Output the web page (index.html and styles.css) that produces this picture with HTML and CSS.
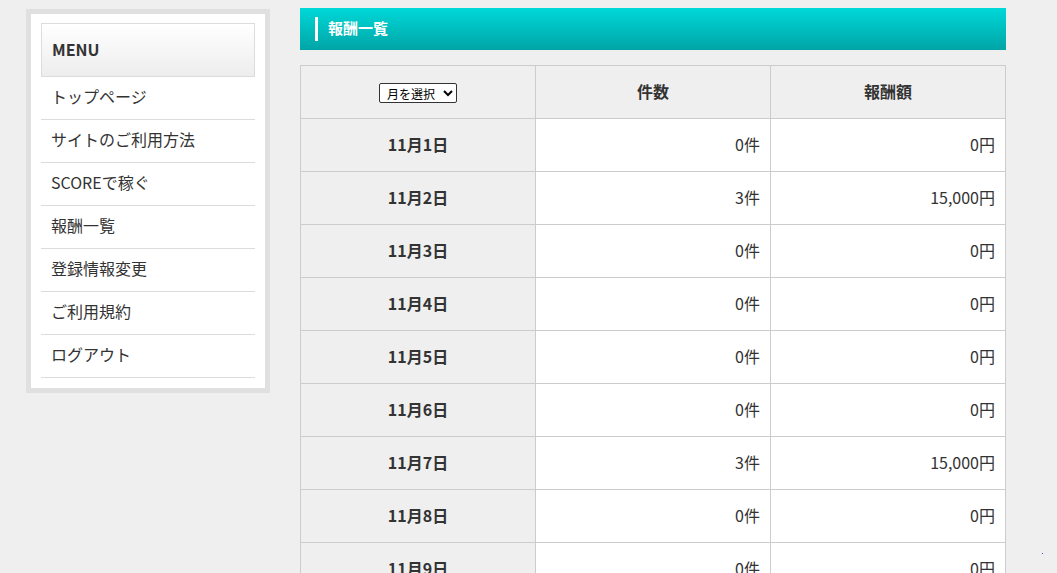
FILE: index.html
```html
<!DOCTYPE html>
<html lang="ja">
<head>
  <meta charset="UTF-8" />
  <meta name="viewport" content="width=device-width, initial-scale=1.0"/>
  <title>報酬一覧</title>
  <link rel="stylesheet" href="styles.css">
</head>
<body>
  <div class="wrapper">
    <aside class="sidebar">
      <div class="menu-box">
        <div class="menu-title">MENU</div>
        <ul class="menu-list">
          <li><a href="#">トップページ</a></li>
          <li><a href="#">サイトのご利用方法</a></li>
          <li><a href="#">SCOREで稼ぐ</a></li>
          <li><a href="#">報酬一覧</a></li>
          <li><a href="#">登録情報変更</a></li>
          <li><a href="#">ご利用規約</a></li>
          <li><a href="#">ログアウト</a></li>
        </ul>
      </div>
    </aside>

    <main class="main">
      <h2 class="page-title">報酬一覧</h2>
      <table class="reward-table">
        <thead>
          <tr>
            <th class="col-date">
              <select class="month-select">
                <option>月を選択</option>
              </select>
            </th>
            <th>件数</th>
            <th>報酬額</th>
          </tr>
        </thead>
        <tbody>
          <tr><th class="col-date">11月1日</th><td>0件</td><td>0円</td></tr>
          <tr><th class="col-date">11月2日</th><td>3件</td><td>15,000円</td></tr>
          <tr><th class="col-date">11月3日</th><td>0件</td><td>0円</td></tr>
          <tr><th class="col-date">11月4日</th><td>0件</td><td>0円</td></tr>
          <tr><th class="col-date">11月5日</th><td>0件</td><td>0円</td></tr>
          <tr><th class="col-date">11月6日</th><td>0件</td><td>0円</td></tr>
          <tr><th class="col-date">11月7日</th><td>3件</td><td>15,000円</td></tr>
          <tr><th class="col-date">11月8日</th><td>0件</td><td>0円</td></tr>
          <tr><th class="col-date">11月9日</th><td>0件</td><td>0円</td></tr>
        </tbody>
      </table>
    </main>
  </div>
  <span class="dot"></span>
</body>
</html>
```

FILE: styles.css
```css
html, body {
  margin: 0;
  padding: 0;
}

body {
  font-family: "Noto Sans CJK JP", "Noto Sans", sans-serif;
  background: #efefef;
  color: #333;
  overflow: hidden;
}

.wrapper {
  display: flex;
  align-items: flex-start;
  gap: 30px;
  padding: 8px 0 0 26px;
}

/* sidebar */
.sidebar {
  width: 244px;
  flex-shrink: 0;
  margin-top: 1px;
}

.menu-box {
  background: #fff;
  border: 5px solid #e0e0e0;
  padding: 9px 10px 10px;
}

.menu-title {
  height: 50px;
  line-height: 50px;
  padding: 0 0 2px 10px;
  border: 1px solid #dcdcdc;
  background: linear-gradient(#ffffff, #ededed);
  font-size: 16px;
  font-weight: bold;
  color: #333;
}

.menu-list {
  list-style: none;
  margin: 0;
  padding: 0;
}

.menu-list li {
  border-bottom: 1px solid #dcdcdc;
}

.menu-list a {
  display: block;
  height: 39px;
  line-height: 39px;
  padding: 0 0 3px 10px;
  font-size: 16px;
  color: #333;
  text-decoration: none;
}

/* main */
.main {
  width: 706px;
}

.page-title {
  box-sizing: border-box;
  margin: 0 0 15px;
  height: 42px;
  display: flex;
  align-items: center;
  padding: 0 0 4px 15px;
  background: linear-gradient(#00d8d8, #00a4a6);
  color: #fff;
  font-size: 15px;
  font-weight: bold;
}

.page-title::before {
  content: "";
  width: 3px;
  height: 24px;
  margin-top: 3px;
  background: #fff;
  margin-right: 10px;
}

.reward-table {
  width: 100%;
  border-collapse: collapse;
  table-layout: fixed;
  font-size: 16px;
}

.reward-table th,
.reward-table td {
  border: 1px solid #cccccc;
  height: 49px;
  padding: 0 10px 3px;
}

.reward-table thead th {
  background: #efefef;
  font-weight: bold;
  text-align: center;
  color: #333;
}

.reward-table tbody th {
  background: #efefef;
  font-weight: bold;
  text-align: center;
}

.reward-table td {
  background: #fff;
  text-align: right;
}

.reward-table thead .col-date {
  padding-bottom: 0;
}

.month-select {
  box-sizing: border-box;
  font-family: "Noto Sans CJK JP", sans-serif;
  font-size: 12px;
  width: 78px;
  height: 20px;
  padding: 0 0 0 3px;
  border: 1px solid #333;
  border-radius: 2px;
  background: #fff;
  color: #000;
}

.dot {
  position: fixed;
  left: 1042px;
  top: 553px;
  width: 1px;
  height: 1px;
  background: #3344ff;
}
```
